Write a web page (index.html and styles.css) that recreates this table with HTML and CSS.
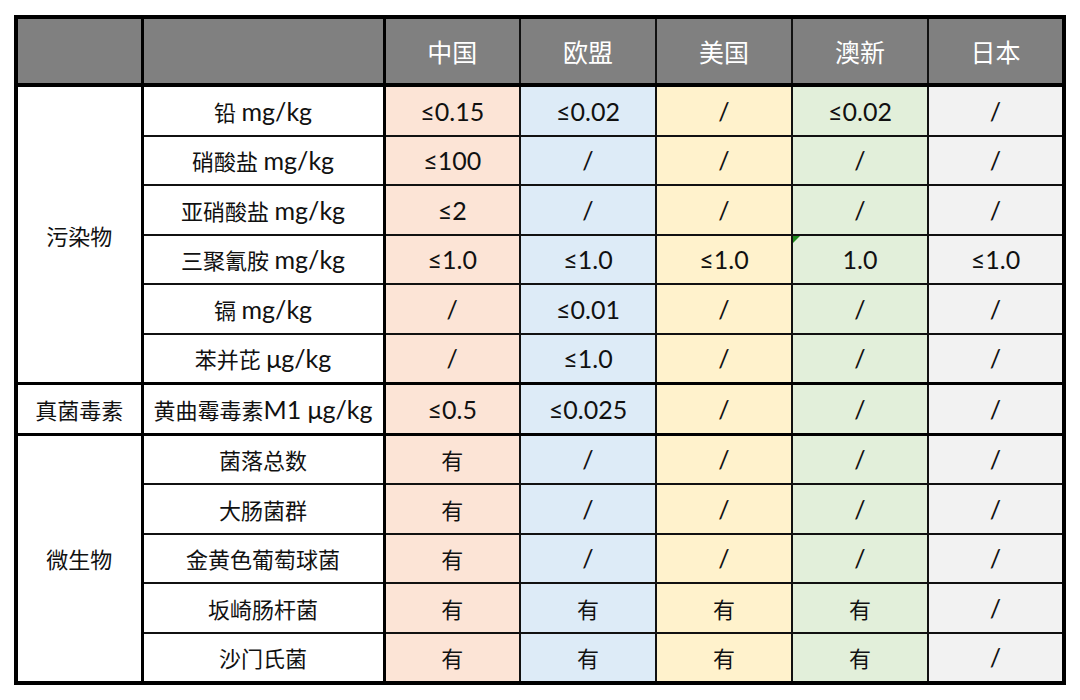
FILE: index.html
```html
<!DOCTYPE html>
<html lang="zh-CN">
<head>
<meta charset="utf-8">
<title>乳制品标准对比</title>
<link rel="stylesheet" href="styles.css">
</head>
<body>
<table class="grid">
  <colgroup>
    <col class="c-cat"><col class="c-item"><col class="c-val"><col class="c-val"><col class="c-val"><col class="c-val"><col class="c-val">
  </colgroup>
  <thead>
    <tr class="head">
      <th class="hcat"></th><th class="hitem"></th><th>中国</th><th>欧盟</th><th>美国</th><th>澳新</th><th>日本</th>
    </tr>
  </thead>
  <tbody class="group">
    <tr><td class="cat" rowspan="6">污染物</td><td class="item">铅 <span class="lat">mg/kg</span></td><td class="cn">≤0.15</td><td class="eu">≤0.02</td><td class="us">/</td><td class="au">≤0.02</td><td class="jp">/</td></tr>
    <tr><td class="item">硝酸盐 <span class="lat">mg/kg</span></td><td class="cn">≤100</td><td class="eu">/</td><td class="us">/</td><td class="au">/</td><td class="jp">/</td></tr>
    <tr><td class="item">亚硝酸盐 <span class="lat">mg/kg</span></td><td class="cn">≤2</td><td class="eu">/</td><td class="us">/</td><td class="au">/</td><td class="jp">/</td></tr>
    <tr><td class="item">三聚氰胺 <span class="lat">mg/kg</span></td><td class="cn">≤1.0</td><td class="eu">≤1.0</td><td class="us">≤1.0</td><td class="au flag">1.0</td><td class="jp">≤1.0</td></tr>
    <tr><td class="item">镉 <span class="lat">mg/kg</span></td><td class="cn">/</td><td class="eu">≤0.01</td><td class="us">/</td><td class="au">/</td><td class="jp">/</td></tr>
    <tr><td class="item">苯并芘 <span class="lat">μg/kg</span></td><td class="cn">/</td><td class="eu">≤1.0</td><td class="us">/</td><td class="au">/</td><td class="jp">/</td></tr>
  </tbody>
  <tbody class="group">
    <tr><td class="cat">真菌毒素</td><td class="item">黄曲霉毒素<span class="lat">M1 μg/kg</span></td><td class="cn">≤0.5</td><td class="eu">≤0.025</td><td class="us">/</td><td class="au">/</td><td class="jp">/</td></tr>
  </tbody>
  <tbody class="group">
    <tr><td class="cat" rowspan="5">微生物</td><td class="item">菌落总数</td><td class="cn zh">有</td><td class="eu">/</td><td class="us">/</td><td class="au">/</td><td class="jp">/</td></tr>
    <tr><td class="item">大肠菌群</td><td class="cn zh">有</td><td class="eu">/</td><td class="us">/</td><td class="au">/</td><td class="jp">/</td></tr>
    <tr><td class="item">金黄色葡萄球菌</td><td class="cn zh">有</td><td class="eu">/</td><td class="us">/</td><td class="au">/</td><td class="jp">/</td></tr>
    <tr><td class="item">坂崎肠杆菌</td><td class="cn zh">有</td><td class="eu zh">有</td><td class="us zh">有</td><td class="au zh">有</td><td class="jp">/</td></tr>
    <tr><td class="item">沙门氏菌</td><td class="cn zh">有</td><td class="eu zh">有</td><td class="us zh">有</td><td class="au zh">有</td><td class="jp">/</td></tr>
  </tbody>
</table>
</body>
</html>
```
FILE: styles.css
```css
html, body {
  margin: 0;
  padding: 0;
  background: #ffffff;
}

body {
  font-family: "Lato", "Noto Sans CJK SC", sans-serif;
  color: #111111;
}

.grid {
  margin: 15px 0 0 14px;
  width: 1050px;
  table-layout: fixed;
  border-collapse: collapse;
  border: 4px solid #000;
}

.c-cat { width: 126px; }
.c-item { width: 242px; }
.c-val { width: 136px; }

.grid th,
.grid td {
  border: 2px solid #111;
  text-align: center;
  vertical-align: middle;
  padding: 0;
  font-weight: normal;
}

.grid td {
  height: 47.5px;
  font-size: 25px;
}

.grid td.cat,
.grid td.item,
.grid td.zh {
  font-size: 22px;
}

.grid td .lat {
  font-size: 25px;
}

.head th {
  height: 64px;
  background: #808080;
  color: #ffffff;
  font-size: 25px;
  border-bottom: 4px solid #000;
}

.head .hcat,
.head .hitem,
.grid .cat,
.grid .item {
  border-right: 3px solid #000;
}

.grid td.cat,
.grid td.item {
  background: #ffffff;
}

.group tr:first-child td {
  border-top: 3px solid #000;
}

.cn { background: #fce4d6; }
.eu { background: #ddebf7; }
.us { background: #fff2cc; }
.au { background: #e2efda; }
.jp { background: #f2f2f2; }

.flag {
  position: relative;
}

.flag::before {
  content: "";
  position: absolute;
  left: 0;
  top: 0;
  width: 0;
  height: 0;
  border-top: 7px solid #1e8a1e;
  border-right: 7px solid transparent;
}
```
